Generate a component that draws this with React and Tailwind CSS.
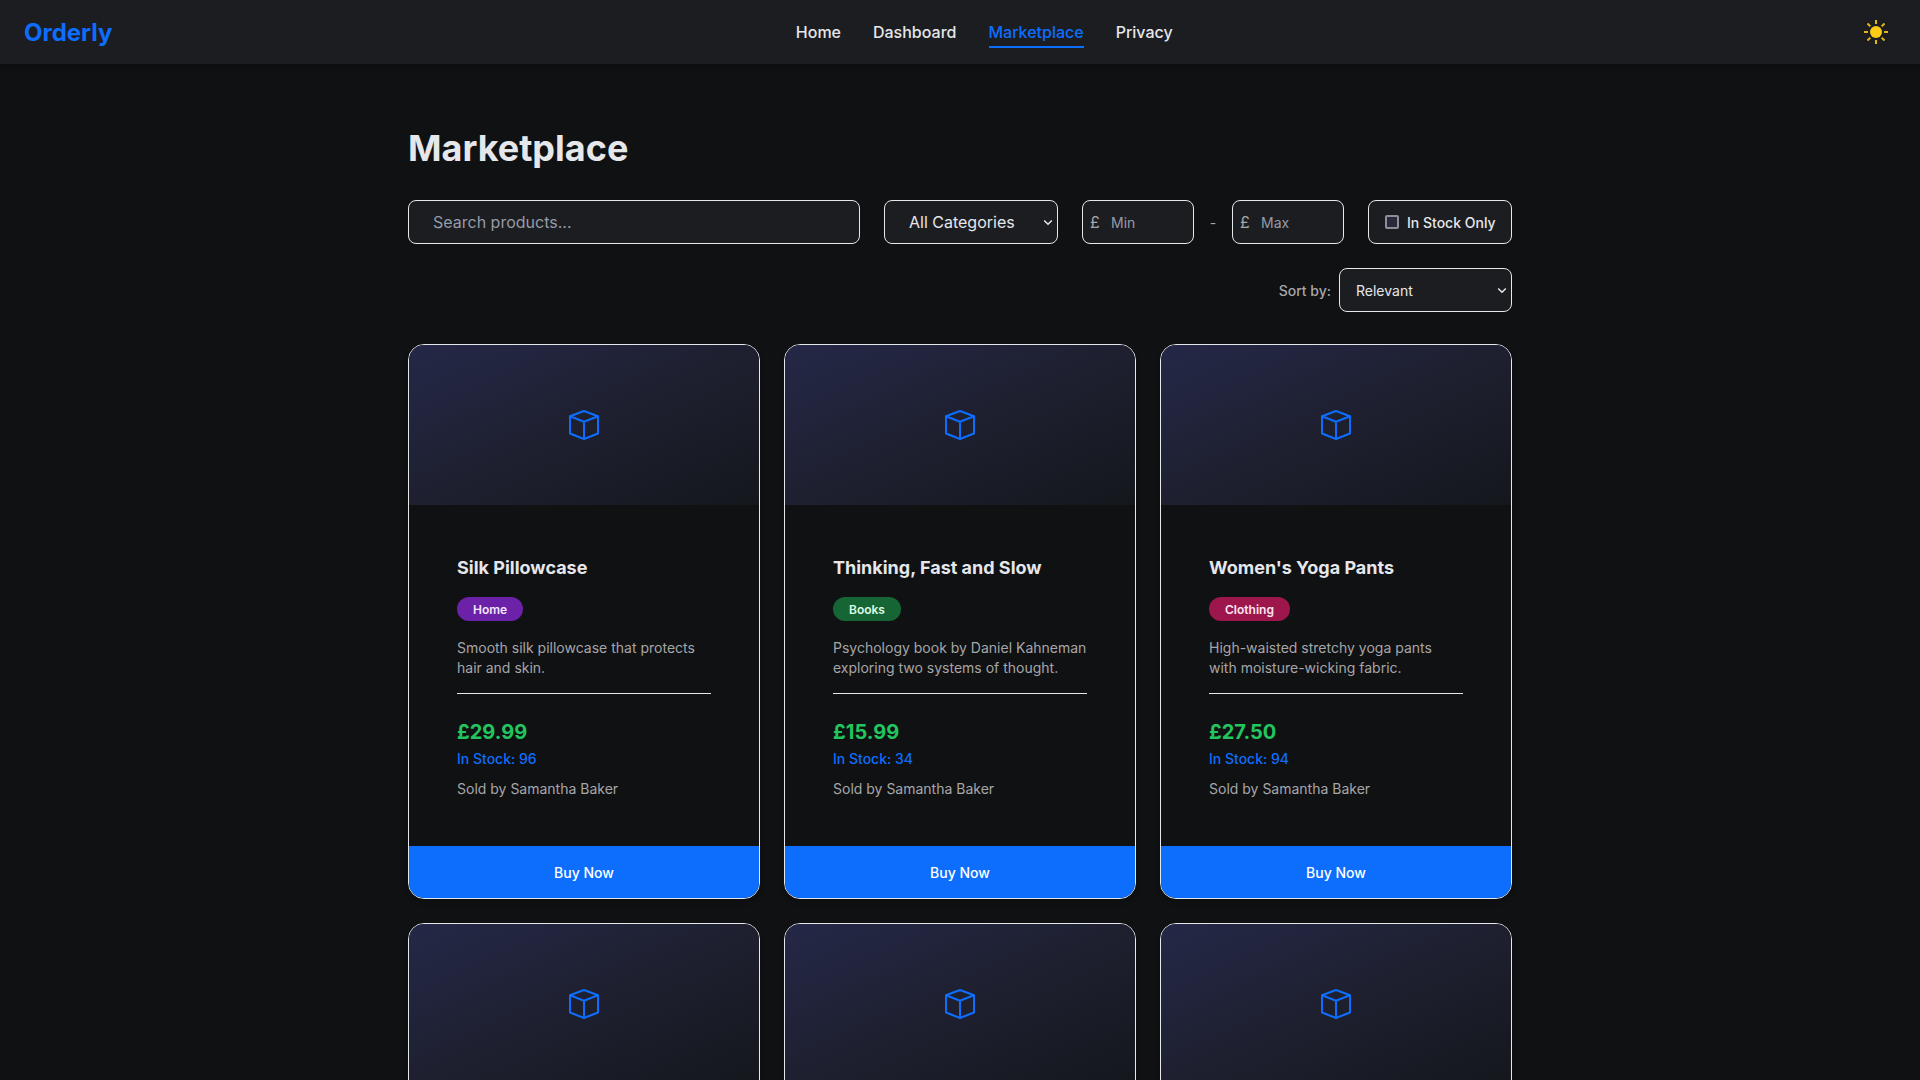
const products = [
  { name: 'Silk Pillowcase', tag: 'Home', tone: 'bg-[#6b21a8] text-[#f3e8ff]', text: 'Smooth silk pillowcase that protects hair and skin.', price: '£29.99', stock: 96 },
  { name: 'Thinking, Fast and Slow', tag: 'Books', tone: 'bg-[#166534] text-[#dcfce7]', text: 'Psychology book by Daniel Kahneman exploring two systems of thought.', price: '£15.99', stock: 34 },
  { name: "Women's Yoga Pants", tag: 'Clothing', tone: 'bg-[#9d174d] text-[#fce7f3]', text: 'High-waisted stretchy yoga pants with moisture-wicking fabric.', price: '£27.50', stock: 94 },
];

const field = 'h-11 rounded-lg border border-[#e5e7eb] bg-[#1c1d21] outline-none';

function Sun() {
  return (
    <svg width="24" height="24" viewBox="0 0 24 24" fill="none">
      <circle cx="12" cy="12" r="6" fill="#facc15" />
      <path
        d="M12 0v4M12 20v4M0 12h4M20 12h4M3.5 3.5l2.85 2.85M17.65 17.65l2.85 2.85M3.5 20.5l2.85-2.85M17.65 6.35l2.85-2.85"
        stroke="#e2b817"
        strokeWidth="2"
      />
    </svg>
  );
}

function Cube() {
  return (
    <svg width="32" height="32" viewBox="0 0 32 32" fill="none" stroke="#0d6efd" strokeWidth="2" strokeLinejoin="round">
      <path d="M2 7.3L16 2l14 5.3v17.2L16 30 2 24.5zM2 7.3l14 5.5 14-5.5M16 12.8V30" />
    </svg>
  );
}

function Media() {
  return (
    <div className="flex h-40 shrink-0 items-center justify-center bg-linear-to-br/srgb from-[#242847] via-[#1e2030] to-[#14171c]">
      <Cube />
    </div>
  );
}

const card = 'flex h-[555px] flex-col overflow-hidden rounded-2xl border border-[#e5e7eb] bg-[#101113] shadow-md';

function Card({ item }) {
  return (
    <article className={card}>
      <Media />
      <div className="h-[341px] px-12 pt-[49px]">
        <h2 className="text-lg leading-7 font-bold text-[#e5e7eb]">{item.name}</h2>
        <span className={`mt-[15px] flex h-6 w-fit items-center rounded-full px-4 pt-px text-xs font-semibold ${item.tone}`}>{item.tag}</span>
        <p className="mt-[17px] text-sm leading-5 text-[#a6a6a8]">{item.text}</p>
        <hr className="mt-[15px] h-px border-0 bg-[#e5e7eb]" />
        <p className="mt-6 text-xl leading-7 font-bold text-[#22c55e]">{item.price}</p>
        <p className="mt-[3px] text-sm leading-5 font-medium text-[#0d6efd]">In Stock: {item.stock}</p>
        <p className="mt-2.5 text-sm leading-5 text-[#a6a6a8]">Sold by Samantha Baker</p>
      </div>
      <button className="h-13 bg-[#0d6efd] pt-0.5 text-sm font-medium text-white">Buy Now</button>
    </article>
  );
}

function Price({ label }) {
  return (
    <label className={`${field} flex w-28 items-center pl-[7px]`}>
      <span className="w-[13px] text-base text-[#a6a6a8]">£</span>
      <input placeholder={label} className="ml-2 w-16 pt-0.5 text-sm outline-none placeholder:text-[#959ba7]" />
    </label>
  );
}

function Select({ label, className }) {
  return (
    <div className="relative">
      <select className={`${field} appearance-none ${className}`}>
        <option>{label}</option>
      </select>
      <svg className="pointer-events-none absolute top-[19px] right-[5px]" width="10" height="7" viewBox="0 0 10 7" fill="none">
        <path d="M1.2 1.5L5 5.3l3.8-3.8" stroke="#e5e7eb" strokeWidth="1.5" />
      </svg>
    </div>
  );
}

export default function App() {
  return (
    <div className="h-screen overflow-hidden bg-[#101113] font-['Inter',sans-serif] text-[#e5e7eb]">
      <header className="flex h-16 items-center justify-between bg-[#1c1d21] px-6 shadow-md">
        <span className="pt-0.5 text-2xl font-bold text-[#0d6efd]">Orderly</span>
        <nav className="flex gap-8 font-medium">
          <a>Home</a>
          <a>Dashboard</a>
          <a className="relative text-[#0d6efd]">
            Marketplace
            <span className="absolute right-0 -bottom-1 left-px h-0.5 bg-[#0d6efd]" />
          </a>
          <a>Privacy</a>
        </nav>
        <button className="flex size-10 items-center justify-center"><Sun /></button>
      </header>

      <main className="mx-auto w-[1104px] pt-16">
        <h1 className="text-4xl leading-10 font-bold">Marketplace</h1>
        <div className="mt-8 flex gap-6">
          <input placeholder="Search products..." className={`${field} min-w-0 flex-1 px-6 text-base placeholder:text-[#959ba7]`} />
          <Select label="All Categories" className="w-[174px] pl-6 text-base" />
          <div className="flex items-center">
            <Price label="Min" />
            <span className="w-[38px] pt-0.5 text-center text-sm text-[#a6a6a8]">-</span>
            <Price label="Max" />
          </div>
          <label className={`${field} flex w-36 items-center gap-2 px-4 text-sm font-medium whitespace-nowrap`}>
            <input type="checkbox" className="size-3.5 shrink-0 appearance-none rounded-xs border-2 border-[#8f8d9d] bg-[#2b2a38]" />
            <span className="pt-0.5">In Stock Only</span>
          </label>
        </div>
        <div className="mt-6 flex items-center justify-end gap-2 text-sm">
          <span className="pt-0.5 font-medium text-[#a6a6a8]">Sort by:</span>
          <Select label="Relevant" className="w-[173px] pt-px pl-4 text-sm" />
        </div>
        <div className="mt-8 grid grid-cols-3 gap-6">
          {products.map((item) => <Card key={item.name} item={item} />)}
          {products.map((item) => (
            <article key={`${item.name}-next`} className={card}><Media /></article>
          ))}
        </div>
      </main>
    </div>
  );
}
